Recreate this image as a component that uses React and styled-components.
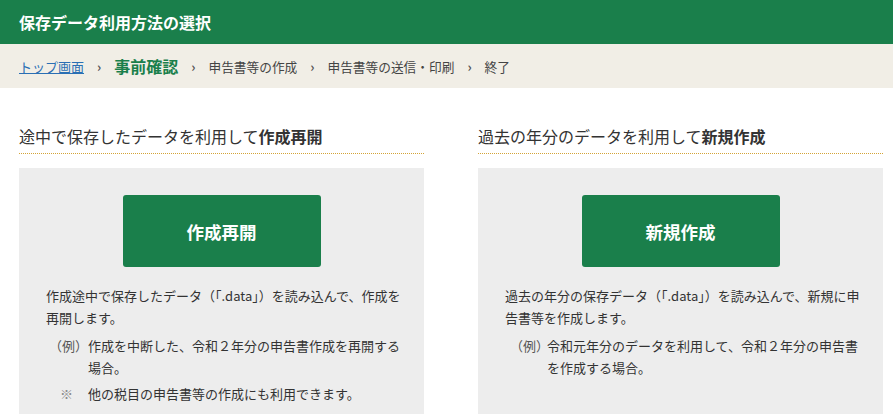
import styled, { createGlobalStyle } from "styled-components";

const GlobalStyle = createGlobalStyle`
  body {
    margin: 0;
    background: #ffffff;
    font-family: "Noto Sans CJK JP", "Noto Sans", sans-serif;
    color: #333333;
  }
`;

const Header = styled.header`
  display: flex;
  align-items: center;
  height: 44px;
  padding: 0 19px;
  background: #1a7f4b;
  color: #ffffff;
  font-size: 16px;
  font-weight: 700;
`;

const Crumbs = styled.nav`
  display: flex;
  align-items: center;
  height: 44px;
  padding: 0 19px;
  background: #f1eee6;
`;

const CrumbLink = styled.a`
  font-size: 13px;
  color: #2a6fb4;
  text-decoration: underline;
`;

const CrumbCurrent = styled.span`
  font-size: 16px;
  font-weight: 700;
  color: #1a7f4b;
`;

const CrumbStep = styled.span`
  font-size: 12.7px;
  color: #444444;
`;

const Sep = styled.span`
  margin: 0 13px;
  font-size: 13px;
  font-weight: 700;
  color: #555555;
`;

const Main = styled.main`
  display: grid;
  grid-template-columns: 405px 405px;
  column-gap: 54px;
  padding: 36px 10px 0 19px;
`;

const Section = styled.section`
  display: flex;
  flex-direction: column;
`;

const Heading = styled.h2`
  margin: 0;
  padding-bottom: 5px;
  font-size: 16px;
  line-height: 24px;
  font-weight: 400;
  color: #333333;
  border-bottom: 1px dotted #d4a437;

  b {
    font-weight: 700;
  }
`;

const Panel = styled.div`
  margin-top: 14px;
  padding: 27px 18px 20px;
  background: #ededed;
  min-height: 230px;
`;

const ActionButton = styled.button`
  display: flex;
  align-items: center;
  justify-content: center;
  width: 198px;
  height: 72px;
  margin: 0 auto;
  border: none;
  border-radius: 3px;
  background: #1a7f4b;
  color: #ffffff;
  font-family: inherit;
  font-size: 17.5px;
  font-weight: 700;
  cursor: pointer;
`;

const Body = styled.div`
  padding-left: 9px;
`;

const Description = styled.p`
  margin: 18px 0 0;
  font-size: 13px;
  line-height: 22px;
  color: #333333;
`;

const Note = styled.div`
  display: grid;
  grid-template-columns: 42px 1fr;
  margin-top: ${(p) => p.gap}px;
  font-size: 13px;
  line-height: 22px;
  color: #333333;
`;

const NoteLabel = styled.span`
  padding-left: ${(p) => p.indent}px;
  color: ${(p) => p.tone};
`;

const notesLeft = [
  { label: "（例）", text: "作成を中断した、令和２年分の申告書作成を再開する場合。", indent: 3, gap: 6, tone: "#555555" },
  { label: "※", text: "他の税目の申告書等の作成にも利用できます。", indent: 14, gap: 4, tone: "#8a8a8a" },
];

const notesRight = [
  { label: "（例）", text: "令和元年分のデータを利用して、令和２年分の申告書を作成する場合。", indent: 5, gap: 6, tone: "#555555" },
];

const Option = ({ lead, strong, button, description, notes }) => (
  <Section>
    <Heading>
      {lead}
      <b>{strong}</b>
    </Heading>
    <Panel>
      <ActionButton>{button}</ActionButton>
      <Body>
        <Description>{description}</Description>
        {notes.map((n) => (
          <Note key={n.text} gap={n.gap}>
            <NoteLabel indent={n.indent} tone={n.tone}>{n.label}</NoteLabel>
            <span>{n.text}</span>
          </Note>
        ))}
      </Body>
    </Panel>
  </Section>
);

const App = () => (
  <>
    <GlobalStyle />
    <Header>保存データ利用方法の選択</Header>
    <Crumbs>
      <CrumbLink href="#">トップ画面</CrumbLink>
      <Sep>›</Sep>
      <CrumbCurrent>事前確認</CrumbCurrent>
      <Sep>›</Sep>
      <CrumbStep>申告書等の作成</CrumbStep>
      <Sep>›</Sep>
      <CrumbStep>申告書等の送信・印刷</CrumbStep>
      <Sep>›</Sep>
      <CrumbStep>終了</CrumbStep>
    </Crumbs>
    <Main>
      <Option
        lead="途中で保存したデータを利用して"
        strong="作成再開"
        button="作成再開"
        description="作成途中で保存したデータ（「.data」）を読み込んで、作成を再開します。"
        notes={notesLeft}
      />
      <Option
        lead="過去の年分のデータを利用して"
        strong="新規作成"
        button="新規作成"
        description="過去の年分の保存データ（「.data」）を読み込んで、新規に申告書等を作成します。"
        notes={notesRight}
      />
    </Main>
  </>
);

export default App;
